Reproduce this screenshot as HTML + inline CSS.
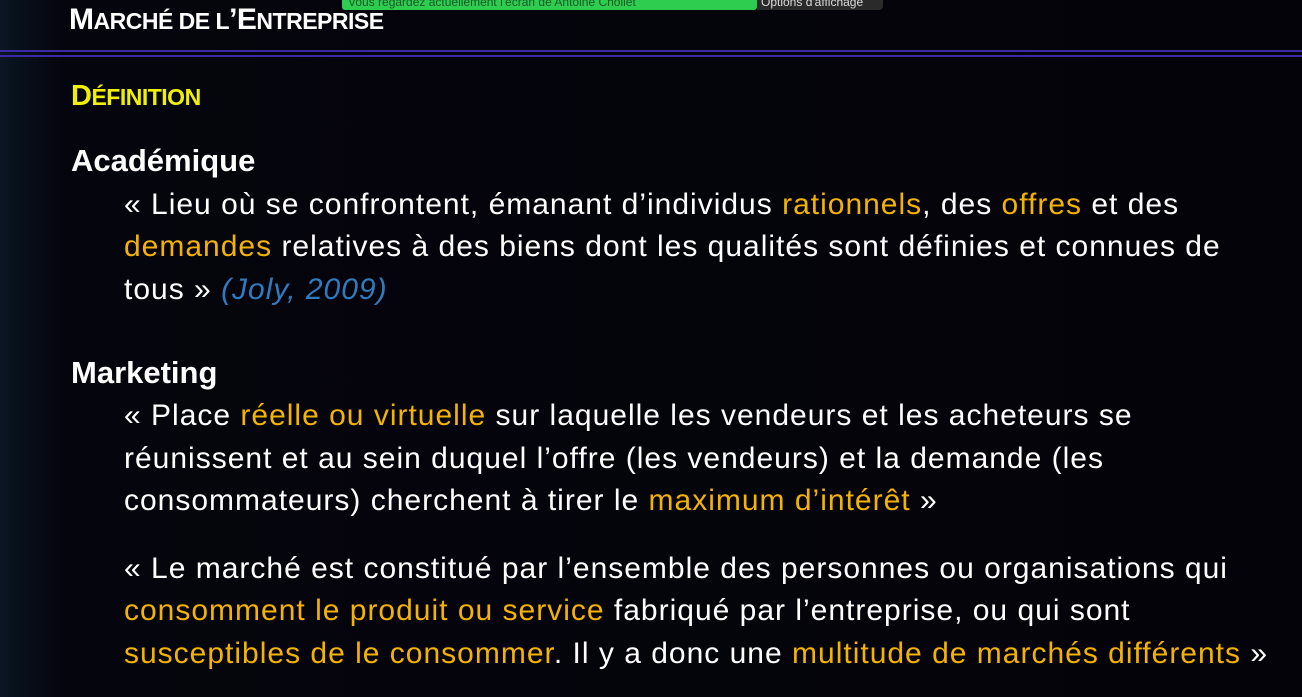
<!DOCTYPE html>
<html><head><meta charset="utf-8"><style>
html,body{margin:0;padding:0}
body{width:1302px;height:697px;overflow:hidden;position:relative;
background:linear-gradient(90deg,#0b1524 0px,#08101c 20px,#05050d 60px,#040309 100%);
font-family:"Liberation Sans",sans-serif;color:#fff}
.t{position:absolute;white-space:nowrap}
.o{color:#f5b301}
.l{position:absolute;left:124px;font-size:30px;letter-spacing:1px;white-space:nowrap;line-height:42px}
.h{position:absolute;left:71px;font-size:31px;font-weight:bold;line-height:32px}
</style></head><body>
<div style="position:absolute;left:342px;top:0;width:415px;height:10px;background:#2ecc4f;border-radius:0 0 3px 3px;overflow:hidden;font-size:12px;color:#1a5a28;line-height:4px;padding-left:6px;box-sizing:border-box">Vous regardez actuellement l'écran de Antoine Chollet</div>
<div style="position:absolute;left:757px;top:0;width:126px;height:10px;background:#2a2a2a;border-radius:0 0 4px 0;overflow:hidden;font-size:12px;color:#ddd;line-height:4px;padding-left:4px;box-sizing:border-box">Options d'affichage</div>
<div class="t" style="left:69px;top:3px;font-size:30px;font-weight:bold;letter-spacing:-0.5px">M<span style="font-size:23px">ARCHÉ DE L</span>’E<span style="font-size:23px">NTREPRISE</span></div>
<div style="position:absolute;left:0;top:50px;width:1302px;height:2px;background:#3a2aa8"></div>
<div style="position:absolute;left:0;top:55px;width:1302px;height:2px;background:#3a2aa8"></div>
<div class="t" style="left:71px;top:80px;font-size:29px;font-weight:bold;color:#f0f000;letter-spacing:-0.5px">D<span style="font-size:23px">ÉFINITION</span></div>
<div class="h" style="top:145px">Académique</div>
<div class="l" style="top:184px">« Lieu où se confrontent, émanant d’individus <span class="o">rationnels</span>, des <span class="o">offres</span> et des</div>
<div class="l" style="top:226px"><span class="o">demandes</span> relatives à des biens dont les qualités sont définies et connues de</div>
<div class="l" style="top:269px">tous » <i style="color:#2e7bbf">(Joly, 2009)</i></div>
<div class="h" style="top:357px">Marketing</div>
<div class="l" style="top:395px">« Place <span class="o">réelle ou virtuelle</span> sur laquelle les vendeurs et les acheteurs se</div>
<div class="l" style="top:438px">réunissent et au sein duquel l’offre (les vendeurs) et la demande (les</div>
<div class="l" style="top:480px">consommateurs) cherchent à tirer le <span class="o">maximum d’intérêt</span> »</div>
<div class="l" style="top:548px">« Le marché est constitué par l’ensemble des personnes ou organisations qui</div>
<div class="l" style="top:590px"><span class="o">consomment le produit ou service</span> fabriqué par l’entreprise, ou qui sont</div>
<div class="l" style="top:633px"><span class="o">susceptibles de le consommer</span>. Il y a donc une <span class="o">multitude de marchés différents</span> »</div>
</body></html>
